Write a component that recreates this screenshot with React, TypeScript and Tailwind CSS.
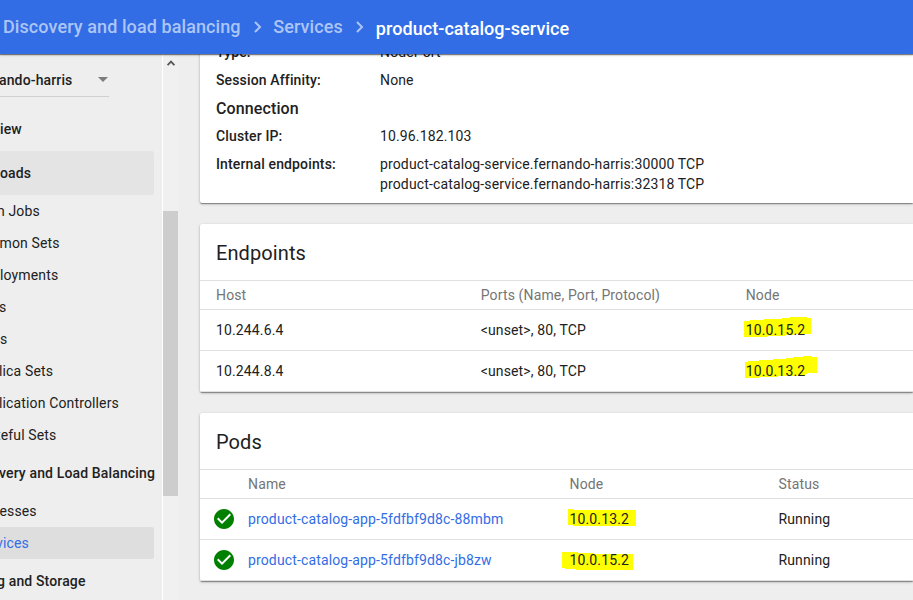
import React from "react";

type NavItem = { label: string; kind: "group" | "item"; cls: string; shift?: string };

const nav: NavItem[] = [
  { label: "iew", kind: "group", cls: "h-[44px] mt-[10px]" },
  { label: "oads", kind: "group", cls: "h-[44px] bg-[#e4e4e4]" },
  { label: "n Jobs", kind: "item", cls: "h-8", shift: "-ml-[3px]" },
  { label: "mon Sets", kind: "item", cls: "h-8", shift: "-ml-[0.5px]" },
  { label: "loyments", kind: "item", cls: "h-8" },
  { label: "s", kind: "item", cls: "h-8", shift: "-ml-[1px]" },
  { label: "s", kind: "item", cls: "h-8" },
  { label: "lica Sets", kind: "item", cls: "h-8", shift: "-ml-[1px]" },
  { label: "lication Controllers", kind: "item", cls: "h-8", shift: "-ml-[1px]" },
  { label: "teful Sets", kind: "item", cls: "h-8", shift: "-ml-[4px]" },
  { label: "very and Load Balancing", kind: "group", cls: "h-[44px]", shift: "-ml-[1px]" },
  { label: "esses", kind: "item", cls: "h-8", shift: "-ml-[0.5px]" },
  { label: "vices", kind: "item", cls: "h-8 bg-[#dedede] text-[#326de6]", shift: "-ml-[4px]" },
  { label: "g and Storage", kind: "group", cls: "h-[44px]", shift: "-ml-[3px]" },
];

function Chevron({ className }: { className: string }) {
  return (
    <svg className={className} width="8" height="12" viewBox="0 0 8 12" fill="none" stroke="#adc5f5" strokeWidth="2">
      <path d="M1 1l5 5-5 5" />
    </svg>
  );
}

function Card({ children, className = "" }: { children: React.ReactNode; className?: string }) {
  return (
    <section
      className={`rounded-l-[2px] bg-white shadow-[0_1px_3px_0_rgba(0,0,0,0.25),0_1px_1px_0_rgba(0,0,0,0.25),0_2px_1px_-1px_rgba(0,0,0,0.12)] ${className}`}
    >
      {children}
    </section>
  );
}

function Title({ children }: { children: string }) {
  return <h2 className="flex h-14 items-center pt-[2px] pl-4 text-[20px] tracking-[0.1px]">{children}</h2>;
}

function Marked({ text, points }: { text: string; points: string }) {
  return (
    <span className="relative isolate inline-block">
      <svg className="absolute -top-4 -left-[17px] -z-10" width="110" height="48" viewBox="-16 -16 110 48" fill="#ffff00" shapeRendering="crispEdges">
        <polygon points={points} />
      </svg>
      {text}
    </span>
  );
}

function Check() {
  return (
    <svg className="-ml-[4px] mr-[12px] shrink-0" width="24" height="24" viewBox="0 0 24 24">
      <path
        fill="#008000"
        d="M12 2C6.48 2 2 6.48 2 12s4.48 10 10 10 10-4.48 10-10S17.52 2 12 2zm-2 15l-5-5 1.41-1.41L10 14.17l7.59-7.59L19 8l-9 9z"
      />
    </svg>
  );
}

function EndpointRow({ host, node, points }: { host: string; node: string; points: string }) {
  return (
    <div className="grid h-[41px] grid-cols-[264.7px_265px_1fr] items-center border-b border-[#e0e0e0] pl-4">
      <span>{host}</span>
      <span>&lt;unset&gt;, 80, TCP</span>
      <span>
        <Marked text={node} points={points} />
      </span>
    </div>
  );
}

function PodRow({ name, node, points }: { name: string; node: string; points: string }) {
  return (
    <div className="grid h-[41px] grid-cols-[32px_321.5px_209px_1fr] items-center border-b border-[#e0e0e0] pl-4">
      <Check />
      <span className="text-[#326de6]">{name}</span>
      <span>
        <Marked text={node} points={points} />
      </span>
      <span>Running</span>
    </div>
  );
}

function Detail({ label, children }: { label: string; children: React.ReactNode }) {
  return (
    <div className="grid grid-cols-[164px_1fr] pt-1 pb-1 pl-4 leading-5">
      <span className="font-medium">{label}</span>
      <span>{children}</span>
    </div>
  );
}

export default function App() {
  return (
    <div className="flex h-[600px] w-[913px] flex-col overflow-hidden bg-[#eeeeee] font-[Roboto,sans-serif] text-[14px] leading-5 tracking-[0.14px] text-[#212121]">
      <header className="z-10 flex h-[54px] shrink-0 items-center bg-[#326de6] pl-[3px] text-[18px] font-medium text-[#adc5f5] shadow-[0_1px_1px_rgba(0,0,0,0.45),0_1px_3px_rgba(0,0,0,0.2)]">
        <span className="tracking-[0.09px]">Discovery and load balancing</span>
        <Chevron className="ml-[13px]" />
        <span className="ml-[11.5px] tracking-[0.09px]">Services</span>
        <Chevron className="ml-[13px]" />
        <span className="ml-[12px] pt-1 tracking-[0.06px] text-white">product-catalog-service</span>
      </header>

      <div className="flex min-h-0 flex-1">
        <nav className="w-[162px] shrink-0 overflow-hidden whitespace-nowrap">
          <div className="flex h-[43px] w-[109px] items-center border-b border-[#d0d0d0] pt-[9px] font-medium">
            <span className="-ml-[1px]">ando-harris</span>
            <svg className="ml-auto mr-[1.5px]" width="10" height="5" viewBox="0 0 10 5" fill="#7c7c7c">
              <path d="M0 0h10l-5 5z" />
            </svg>
          </div>
          {nav.map((n, i) => (
            <div key={i} className={`flex w-[154px] items-center rounded-r-[2px] ${n.kind === "group" ? "font-medium" : ""} ${n.cls}`}>
              <span className={n.shift ?? ""}>{n.label}</span>
            </div>
          ))}
        </nav>

        <div className="flex w-[17px] shrink-0 flex-col border-l border-white bg-[#f0f0f0]">
          <svg className="mt-[6px] ml-[3.5px]" width="8" height="6" viewBox="0 0 8 6" fill="none" stroke="#555" strokeWidth="1.8">
            <path d="M0.6 5.2L4 1.6l3.4 3.6" />
          </svg>
          <div className="mt-[145px] h-[285px] w-[15px] bg-[#cdcdcd]" />
        </div>

        <main className="ml-[21px] min-w-0 flex-1">
          <Card className="-mt-[16px] h-[165px]">
            <Detail label="Type:">NodePort</Detail>
            <Detail label="Session Affinity:">None</Detail>
            <h3 className="pt-[5px] pb-[3px] pl-4 text-[16px] leading-5 font-medium tracking-[0.12px]">Connection</h3>
            <Detail label="Cluster IP:">10.96.182.103</Detail>
            <Detail label="Internal endpoints:">
              product-catalog-service.fernando-harris:30000 TCP
              <br />
              product-catalog-service.fernando-harris:32318 TCP
            </Detail>
          </Card>

          <Card className="mt-[21px]">
            <Title>Endpoints</Title>
            <div className="grid h-[30px] grid-cols-[264.7px_265px_1fr] items-center border-y border-[#e0e0e0] pl-4 text-[#757575]">
              <span>Host</span>
              <span>Ports (Name, Port, Protocol)</span>
              <span>Node</span>
            </div>
            <EndpointRow host="10.244.6.4" node="10.0.15.2" points="-1,1 5,1 5,0 19,0 19,-1 37,-1 37,-2 45,-2 45,-3 62,-3 62,-2 66,-2 66,14 48,14 48,15 40,15 40,16 22,16 22,17 -1,17" />
            <EndpointRow host="10.244.8.4" node="10.0.13.2" points="0,1 3,1 3,0 14,0 14,-1 28,-1 28,-2 41,-2 41,-3 48,-3 48,-4 58,-4 58,-5 67,-5 67,-4 72,-4 72,12 62,12 62,13 60,13 60,15 33,15 33,16 14,16 14,17 0,17" />
          </Card>

          <Card className="mt-[21px]">
            <Title>Pods</Title>
            <div className="grid h-[30px] grid-cols-[32px_321.5px_209px_1fr] items-center border-y border-[#e0e0e0] pl-4 text-[#757575]">
              <span />
              <span>Name</span>
              <span>Node</span>
              <span>Status</span>
            </div>
            <PodRow name="product-catalog-app-5fdfbf9d8c-88mbm" node="10.0.13.2" points="-1,0 5,0 5,1 67,1 67,17 4,17 4,16 -1,16" />
            <PodRow name="product-catalog-app-5fdfbf9d8c-jb8zw" node="10.0.15.2" points="-7,2 9,2 9,3 24,3 24,4 64,4 64,20 7,20 7,19 -4,19 -4,18 -7,18" />
          </Card>
        </main>
      </div>
    </div>
  );
}
